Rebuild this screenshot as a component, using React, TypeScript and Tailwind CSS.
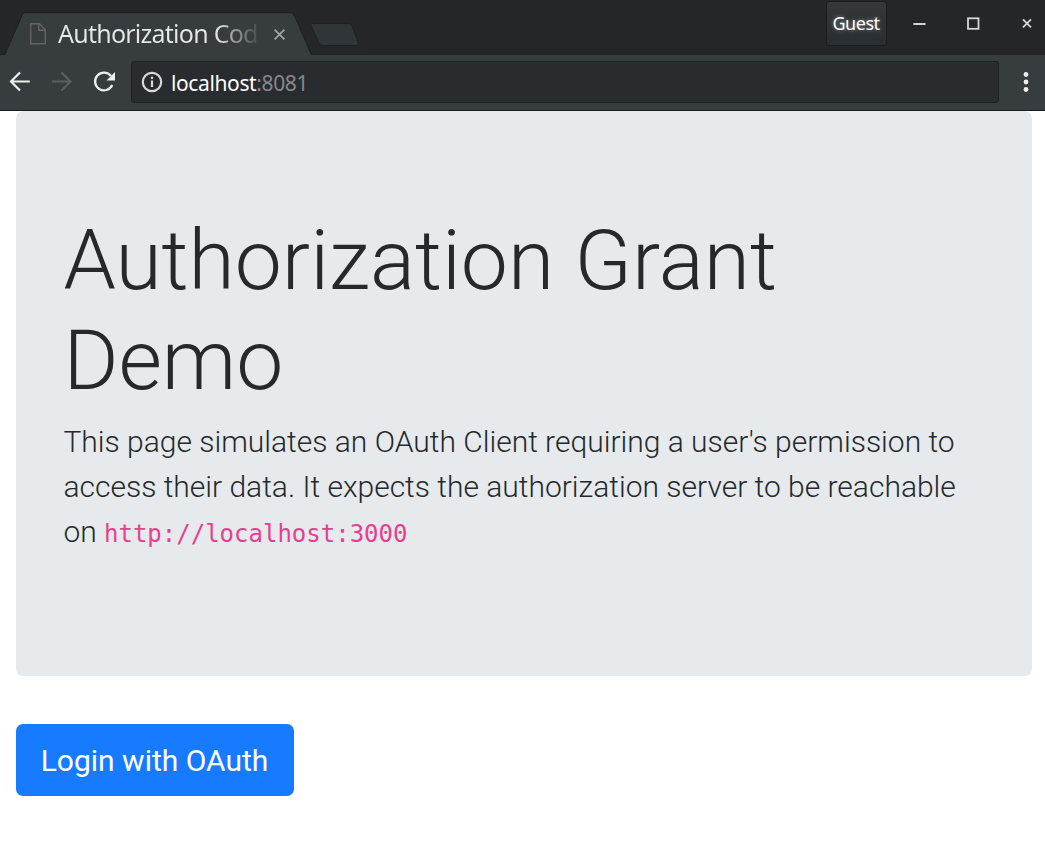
function TabStrip() {
  return (
    <header className="relative flex h-[55px] items-start justify-between bg-[#252627]">
      <svg className="absolute inset-0 h-[55px] w-[370px]" viewBox="0 0 370 55">
        <path d="M0 54.5H370" stroke="#1f2122" />
        <path d="M4.500 55L21.500 17C22.500 14 23 12.700 25.500 12.700H290C292.500 12.700 293.500 14 294.500 16L311.500 55Z" fill="#373c3f" stroke="#1d1f20" />
        <path d="M6 55H311" stroke="#373c3f" strokeWidth="2" />
        <path d="M312 23.500H348C350 23.500 351 24.500 352 26.500L358 42C358.700 44.500 358 45.500 356 45.500H323C321 45.500 320 45 319 42.500L311 25.500C310.500 24 311 23.500 312 23.500Z" fill="#303537" stroke="#1f2122" />
      </svg>
      <div className="relative flex h-[55px] items-center pt-[12px] pl-[30px]">
        <svg width="16" height="22" viewBox="0 0 16 22" fill="none" stroke="#666463" strokeWidth="1.400">
          <path d="M.7.700H9.500L15.300 7V20.800H.7Z" />
          <path d="M8.700 1V7.300H15" />
        </svg>
        <span className="mb-[2px] ml-[12px] w-[201px] overflow-hidden bg-linear-to-r from-[#e8e8e6] from-78% to-[#44494c] bg-clip-text text-[25px] leading-[34px] tracking-[-0.75px] whitespace-nowrap text-transparent">
          Authorization Cod
        </span>
        <svg className="mt-px ml-[15px]" width="11" height="11" viewBox="0 0 11 11" stroke="#a0a3a3" strokeWidth="1.800">
          <path d="M.6.600L10.400 10.400M10.400.600L.6 10.400" />
        </svg>
      </div>
      <div className="relative flex h-[46px] items-center">
        <button className="h-[45px] w-[61px] rounded-[3px] border border-[#1b1c1d] bg-linear-to-b from-[#34383a] to-[#2a2e30] pr-px text-[18px] tracking-[-0.5px] text-white [text-shadow:0_0_4px_#ffffff70]">
          Guest
        </button>
        <svg className="ml-[26px]" width="132" height="46" viewBox="0 0 132 46" fill="none" stroke="#d5d7d5">
          <path d="M.3 24H12.500" strokeWidth="2" />
          <rect x="55" y="18.300" width="10.500" height="10.500" strokeWidth="1.800" />
          <path d="M110 19.300L118 27.300M118 19.300L110 27.300" strokeWidth="1.800" />
        </svg>
      </div>
    </header>
  );
}

function Toolbar() {
  return (
    <nav className="flex h-14 items-start border-b border-[#1b1d1e] bg-[#373c3f]">
      <svg width="131" height="55" viewBox="0 0 131 55" fill="none" strokeWidth="2.200">
        <path d="M29.800 26.500H11.500M20 17.500L11 26.500L20 35.500" stroke="#eeeeec" />
        <path d="M52 26.500H70.500M61.500 17.500L70.500 26.500L61.500 35.500" stroke="#5b5f60" />
        <path d="M111 21A8.900 8.900 0 1 0 112.200 30" stroke="#eeeeec" strokeWidth="2.300" />
        <path d="M115 17V25.500H106.500Z" fill="#eeeeec" />
      </svg>
      <div className="mt-[6px] flex h-[42px] w-[868px] items-center rounded-[3px] border border-[#1f2224] bg-[#282c2f] pl-[9px]">
        <svg width="22" height="22" viewBox="0 0 22 22" fill="none" stroke="#d8d9d8" strokeWidth="2.200">
          <circle cx="11" cy="11" r="9.200" />
          <path d="M11 9.500V16M11 5.700V8" />
        </svg>
        <span className="mt-px ml-[8px] text-[21px] leading-[30px] tracking-[-0.38px] text-white">
          localhost<span className="text-[#85898a]">:8081</span>
        </span>
      </div>
      <svg className="mt-[16px] ml-[24px]" width="6" height="22" viewBox="0 0 6 22" fill="#eeeeec">
        <circle cx="3" cy="3.500" r="2.400" />
        <circle cx="3" cy="11" r="2.400" />
        <circle cx="3" cy="18.500" r="2.400" />
      </svg>
    </nav>
  );
}

export default function App() {
  return (
    <div className="flex h-[853px] w-[1045px] flex-col overflow-hidden bg-white font-['Noto_Sans',sans-serif]">
      <TabStrip />
      <Toolbar />
      <main className="w-[1032px] pl-4 font-[Roboto,sans-serif] text-[#25292c]">
        <section className="mb-12 h-[565px] rounded-[7px] bg-[#e6eaed] pt-[100px] pr-12 pl-[47.4px]">
          <h1 className="mb-[8px] text-[84px] leading-[100px] font-light">Authorization Grant Demo</h1>
          <p className="text-[30px] leading-[45px] font-light">
            This page simulates an OAuth Client requiring a user's permission to access their data. It expects the
            authorization server to be reachable on{" "}
            <code className="font-['DejaVu_Sans_Mono',monospace] text-[24px] leading-none font-normal text-[#e83e8c]">
              http://localhost:3000
            </code>
          </p>
        </section>
        <button className="h-[72px] w-[278px] rounded-[7px] bg-[#177bff] pr-px text-[30px] leading-[45px] text-white">
          Login with OAuth
        </button>
      </main>
    </div>
  );
}
